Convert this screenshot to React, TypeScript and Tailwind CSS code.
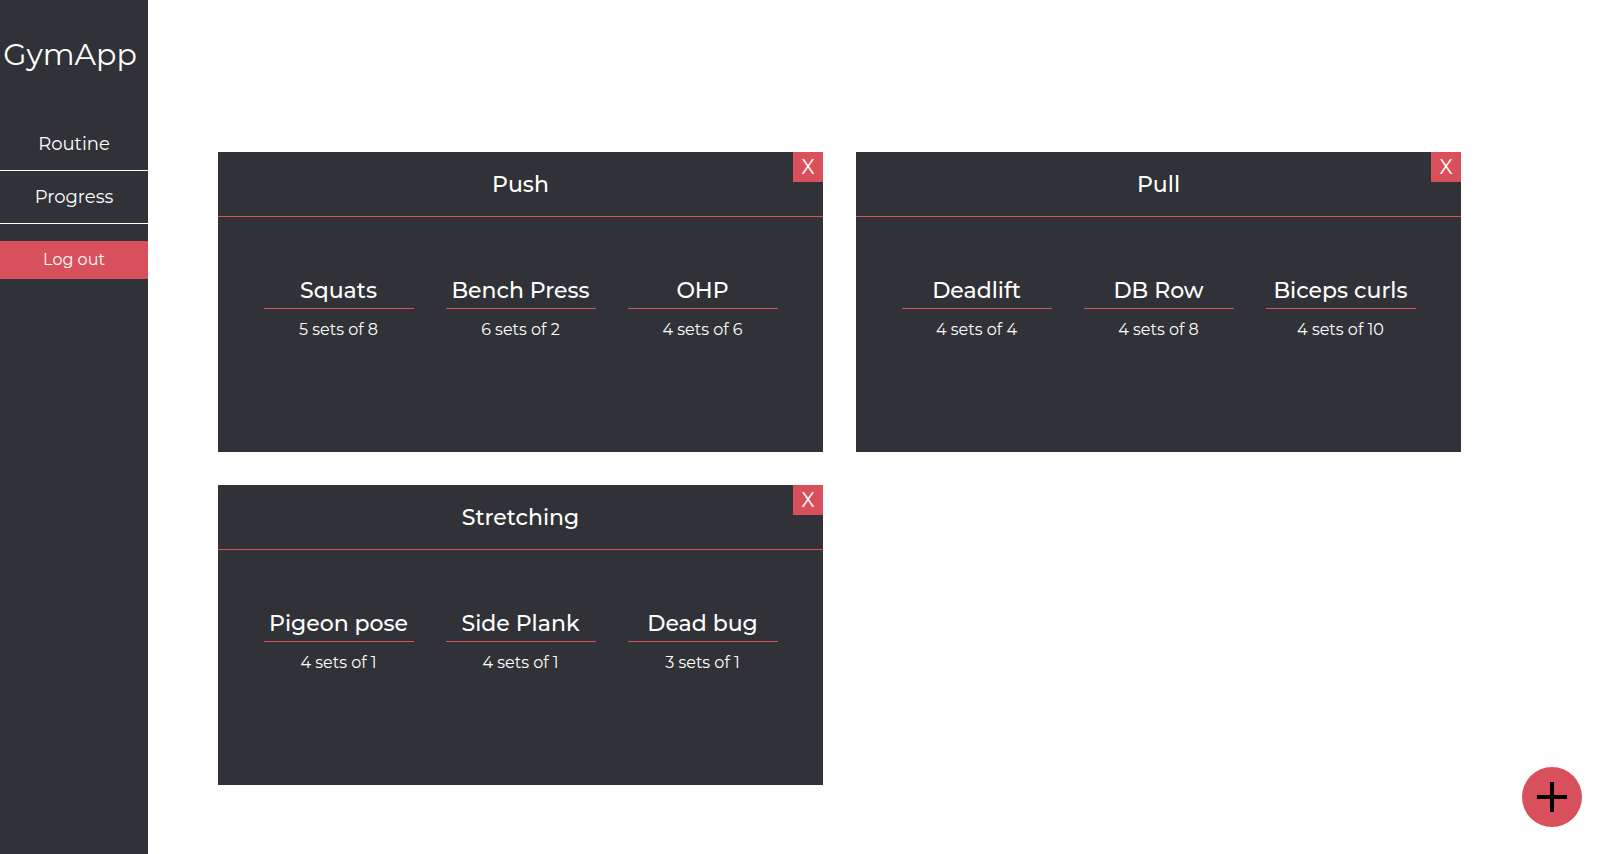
import React from "react";

type Exercise = { name: string; sets: string };
type Routine = { title: string; exercises: Exercise[] };

const routines: Routine[] = [
  {
    title: "Push",
    exercises: [
      { name: "Squats", sets: "5 sets of 8" },
      { name: "Bench Press", sets: "6 sets of 2" },
      { name: "OHP", sets: "4 sets of 6" },
    ],
  },
  {
    title: "Pull",
    exercises: [
      { name: "Deadlift", sets: "4 sets of 4" },
      { name: "DB Row", sets: "4 sets of 8" },
      { name: "Biceps curls", sets: "4 sets of 10" },
    ],
  },
  {
    title: "Stretching",
    exercises: [
      { name: "Pigeon pose", sets: "4 sets of 1" },
      { name: "Side Plank", sets: "4 sets of 1" },
      { name: "Dead bug", sets: "3 sets of 1" },
    ],
  },
];

function Card({ r }: { r: Routine }) {
  return (
    <div className="relative h-[300px] bg-[#303237] text-white">
      <div className="flex h-[65px] items-center justify-center border-b border-[#d9505d] text-[22px] font-medium">
        {r.title}
      </div>
      <button className="absolute right-0 top-0 flex h-[30px] w-[30px] items-center justify-center bg-[#d9505d] text-[20px] leading-none text-white">
        X
      </button>
      <div className="flex justify-center gap-[32px] pt-[60px]">
        {r.exercises.map((e) => (
          <div key={e.name} className="flex w-[150px] flex-col items-center">
            <div className="w-full border-b border-[#d9505d] pb-[4px] text-center text-[22px] font-medium leading-[27px]">
              {e.name}
            </div>
            <div className="mt-[9px] text-center text-[16px] font-normal leading-[24px]">
              {e.sets}
            </div>
          </div>
        ))}
      </div>
    </div>
  );
}

export default function App() {
  return (
    <div
      className="flex h-screen w-full bg-white"
      style={{ fontFamily: '"Montserrat", Inter, "Noto Sans", sans-serif' }}
    >
      <aside className="flex h-screen w-[148px] shrink-0 flex-col bg-[#303237] text-white">
        <div className="flex h-[108px] items-center justify-center pr-[8px] text-[30px]">
          GymApp
        </div>
        <nav className="mt-[11px] flex flex-col">
          <a className="flex h-[52px] items-center justify-center border-b border-white text-[18px]">
            Routine
          </a>
          <a className="flex h-[53px] items-center justify-center border-b border-white text-[18px]">
            Progress
          </a>
          <a className="mt-[17px] flex h-[38px] items-center justify-center bg-[#d9505d] text-[16px]">
            Log out
          </a>
        </nav>
      </aside>
      <main className="flex-1 pl-[70px] pt-[152px]">
        <div className="grid grid-cols-[605px_605px] gap-[33px]">
          {routines.map((r) => (
            <Card key={r.title} r={r} />
          ))}
        </div>
      </main>
      <button className="fixed bottom-[27px] right-[23px] flex h-[60px] w-[60px] items-center justify-center rounded-full bg-[#d9505d]">
        <svg width="30" height="30" viewBox="0 0 30 30">
          <rect x="13" y="0" width="4" height="30" fill="#000" />
          <rect x="0" y="13" width="30" height="4" fill="#000" />
        </svg>
      </button>
    </div>
  );
}
